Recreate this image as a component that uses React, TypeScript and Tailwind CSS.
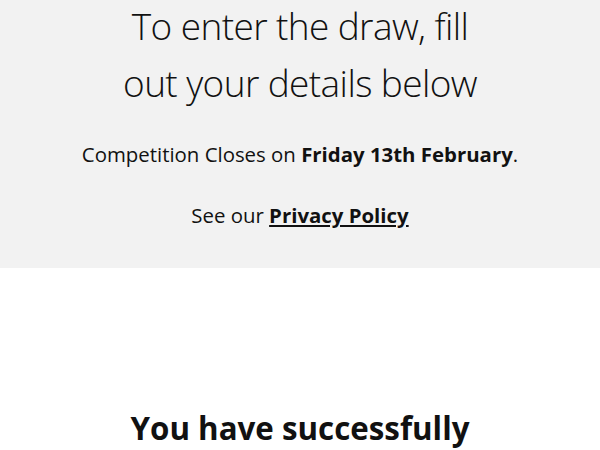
export default function App() {
  return (
    <div className="min-h-[450px] overflow-hidden bg-white font-['Open_Sans',sans-serif] text-[#111]">
      <section className="bg-[#f2f2f2] pb-[39px] text-center">
        <h1 className="mx-auto -mt-[3px] max-w-[360px] text-[37px] font-light leading-[57px] tracking-[-0.6px]">
          To enter the draw, fill out your details below
        </h1>
        <p className="mt-[29px] text-[20.4px] leading-[28px]">
          Competition Closes on <strong className="font-bold">Friday 13th February</strong>.
        </p>
        <p className="mt-[33px] text-[20.4px] leading-[28px]">
          See our{" "}
          <a href="#" className="font-bold underline decoration-2 underline-offset-2">
            Privacy Policy
          </a>
        </p>
      </section>
      <section className="pt-[140px] text-center">
        <h2 className="text-[31.3px] font-bold leading-[40px]">You have successfully</h2>
      </section>
    </div>
  );
}
